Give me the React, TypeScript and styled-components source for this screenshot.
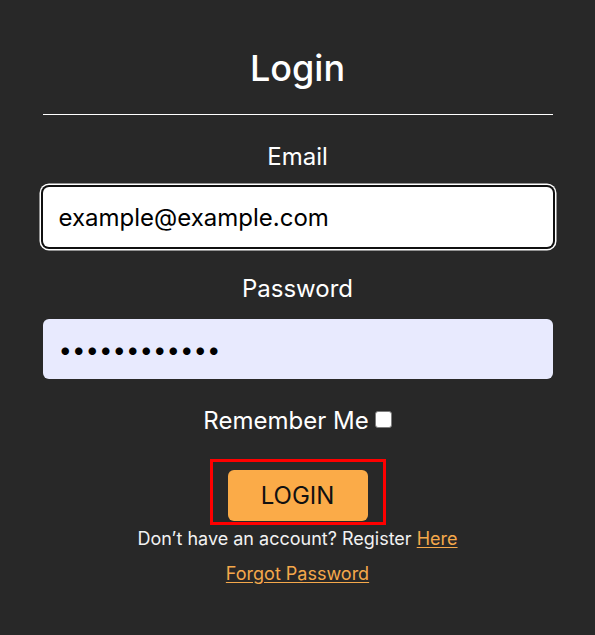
import React from "react";
import styled, { createGlobalStyle } from "styled-components";

const GlobalStyle = createGlobalStyle`
  html, body {
    margin: 0;
    padding: 0;
    background: #282828;
  }
  body {
    font-family: Inter, "Noto Sans", "Liberation Sans", sans-serif;
    color: #ffffff;
  }
  * { box-sizing: border-box; }
`;

const Page = styled.div`
  min-height: 635px;
  background: #282828;
  display: flex;
  justify-content: center;
  padding-top: 46px;
`;

const Form = styled.form`
  width: 510px;
  display: flex;
  flex-direction: column;
  align-items: center;
`;

const Title = styled.h1`
  margin: 0;
  font-size: 36px;
  line-height: 44px;
  font-weight: 500;
  color: #ffffff;
`;

const Divider = styled.hr`
  align-self: stretch;
  margin: 24px 0 0;
  border: none;
  height: 1px;
  background: #ffffff;
`;

const Label = styled.label`
  margin: 27px 0 16px;
  font-size: 24px;
  line-height: 29px;
  font-weight: 400;
  color: #ffffff;
`;

const Input = styled.input<{ $focused?: boolean; $autofilled?: boolean }>`
  width: 100%;
  height: 60px;
  border: none;
  border-radius: 6px;
  padding: 0 16px;
  font-family: Inter, "Noto Sans", "Liberation Sans", sans-serif;
  font-size: 24px;
  color: #000000;
  background: ${(p) => (p.$autofilled ? "#e8eafe" : "#ffffff")};
  outline: none;
  box-shadow: ${(p) =>
    p.$focused ? "0 0 0 2px #101010, 0 0 0 3.5px #ffffff" : "none"};
`;

const RememberRow = styled.label`
  margin-top: 27px;
  display: flex;
  align-items: center;
  gap: 6px;
  font-size: 24px;
  line-height: 29px;
  color: #ffffff;
`;

const Check = styled.input`
  appearance: none;
  -webkit-appearance: none;
  width: 17px;
  height: 17px;
  margin: 0;
  border: 1.5px solid #7d7d7d;
  border-radius: 3px;
  background: #ffffff;
  position: relative;
  top: -1px;
`;

const Highlight = styled.div`
  margin-top: 24px;
  border: 3px solid #ff0000;
  padding: 8px 15px 1px;
  display: flex;
`;

const LoginButton = styled.button`
  width: 140px;
  height: 51px;
  border: none;
  border-radius: 6px;
  background: #fbab48;
  color: #111111;
  font-family: Inter, "Noto Sans", "Liberation Sans", sans-serif;
  font-size: 24px;
  font-weight: 400;
  cursor: pointer;
`;

const SmallText = styled.p<{ $gap: number }>`
  margin: ${(p) => p.$gap}px 0 0;
  font-size: 18px;
  line-height: 22px;
  color: #f2f2f2;
`;

const Link = styled.a`
  color: #f5a84b;
  text-decoration: underline;
  text-underline-offset: 2px;
`;

export default function App() {
  return (
    <>
      <GlobalStyle />
      <Page>
        <Form onSubmit={(e) => e.preventDefault()}>
          <Title>Login</Title>
          <Divider />
          <Label htmlFor="email">Email</Label>
          <Input
            id="email"
            type="email"
            defaultValue="example@example.com"
            $focused
          />
          <Label htmlFor="password">Password</Label>
          <Input
            id="password"
            type="password"
            defaultValue="password1234"
            $autofilled
          />
          <RememberRow>
            Remember Me
            <Check type="checkbox" />
          </RememberRow>
          <Highlight>
            <LoginButton type="submit">LOGIN</LoginButton>
          </Highlight>
          <SmallText $gap={3}>
            Don’t have an account? Register <Link href="#">Here</Link>
          </SmallText>
          <SmallText $gap={13}>
            <Link href="#">Forgot Password</Link>
          </SmallText>
        </Form>
      </Page>
    </>
  );
}
